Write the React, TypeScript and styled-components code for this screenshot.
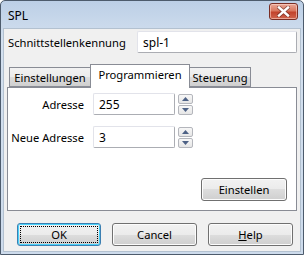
import React from 'react'
import styled, { createGlobalStyle } from 'styled-components'

const GlobalStyle = createGlobalStyle`
  html, body {
    margin: 0;
    padding: 0;
    background: #ffffff;
  }
  body {
    font-family: "Noto Sans", "Open Sans", sans-serif;
    font-size: 11.2px;
    color: #000000;
  }
`

const Window = styled.div`
  width: 304px;
  height: 255px;
  box-sizing: border-box;
  border: 1px solid #4d5b6c;
  border-radius: 5px 5px 0 0;
  background: linear-gradient(#bccfe6, #d3e0ef 40px, #cddbec);
  display: flex;
  flex-direction: column;
  overflow: hidden;
`

const TitleBar = styled.div`
  height: 27px;
  display: flex;
  align-items: flex-start;
  justify-content: space-between;
  padding: 0 5px 0 7px;
`

const Title = styled.div`
  font-size: 12px;
  line-height: 14px;
  margin-top: 8px;
`

const CloseButton = styled.div`
  width: 29px;
  height: 17px;
  margin-top: 2px;
  box-sizing: border-box;
  border: 1px solid #7a2e24;
  border-radius: 3px;
  background: linear-gradient(#e9a899, #d9785f 45%, #c2432c 55%, #d0654d);
  box-shadow: inset 0 0 0 1px rgba(255, 220, 210, 0.55);
  display: flex;
  align-items: center;
  justify-content: center;
`

const Client = styled.div`
  flex: 1;
  margin: 0 2px 2px 2px;
  background: #f0f0f0;
  border: 1px solid #b3c1d0;
  padding: 2px 3px 0 3px;
  display: flex;
  flex-direction: column;
`

const IdRow = styled.div`
  display: flex;
  align-items: center;
  justify-content: space-between;
  height: 22px;
  padding-left: 1px;
`

const TextBox = styled.div<{ $w: number }>`
  width: ${({ $w }) => $w}px;
  height: 22px;
  box-sizing: border-box;
  border: 1px solid #abadb3;
  border-top-color: #e2e3ea;
  border-left-color: #e2e3ea;
  border-radius: 2px;
  background: #ffffff;
  padding: 0 5px;
  display: flex;
  align-items: center;
  font-size: 12px;
`

const TabStrip = styled.div`
  display: flex;
  align-items: flex-end;
  margin-top: 11px;
  padding-left: 2px;
  height: 23px;
  position: relative;
  z-index: 1;
`

const Tab = styled.div<{ $w: number; $active?: boolean }>`
  width: ${({ $w }) => $w}px;
  height: ${({ $active }) => ($active ? 24 : 20)}px;
  box-sizing: border-box;
  border: 1px solid #898c95;
  border-bottom: ${({ $active }) => ($active ? 'none' : '1px solid #898c95')};
  margin-right: -1px;
  margin-bottom: ${({ $active }) => ($active ? -1 : 0)}px;
  background: ${({ $active }) =>
    $active ? '#ffffff' : 'linear-gradient(#f2f2f2, #ebebeb 50%, #dddddd 50%, #cfcfcf)'};
  display: flex;
  align-items: ${({ $active }) => ($active ? 'flex-start' : 'center')};
  padding-top: ${({ $active }) => ($active ? 2 : 0)}px;
  justify-content: center;
`

const Panel = styled.div`
  height: 124px;
  box-sizing: border-box;
  border: 1px solid #898c95;
  background: #ffffff;
  padding: 5px 9px 9px 3px;
  display: flex;
  flex-direction: column;
  gap: 11px;
`

const FieldRow = styled.div`
  display: flex;
  align-items: center;
`

const FieldLabel = styled.div`
  width: 73px;
  margin-right: 9px;
  text-align: right;
  white-space: nowrap;
`

const Spinner = styled.div`
  display: flex;
  flex-direction: column;
  gap: 1px;
  margin-left: 3px;
`

const SpinButton = styled.div`
  width: 15px;
  height: 10px;
  box-sizing: border-box;
  border: 1px solid #b4b6bc;
  border-radius: 2px;
  background: linear-gradient(#f7f7f7, #e6e6e6);
  display: flex;
  align-items: center;
  justify-content: center;
`

const PushButton = styled.div<{ $w: number; $default?: boolean }>`
  width: ${({ $w }) => $w}px;
  height: 23px;
  box-sizing: border-box;
  border: 1px solid ${({ $default }) => ($default ? '#3c7fb1' : '#707070')};
  border-radius: 3px;
  background: linear-gradient(#f2f2f2, #ebebeb 50%, #dddddd 50%, #cfcfcf);
  box-shadow: inset 0 0 0 1px ${({ $default }) => ($default ? '#48d2fb' : '#fcfcfc')};
  display: flex;
  align-items: center;
  justify-content: center;
  position: relative;
`

const FocusRect = styled.div`
  position: absolute;
  inset: 2px;
  border: 1px dotted #000000;
`

const PanelFooter = styled.div`
  margin-top: auto;
  display: flex;
  justify-content: flex-end;
`

const ButtonRow = styled.div`
  display: flex;
  gap: 11px;
  margin-top: 12px;
  padding-left: 10px;
`

const Mnemonic = styled.span`
  text-decoration: underline;
`

const Arrow = ({ up }: { up?: boolean }) => (
  <svg width="7" height="4" viewBox="0 0 7 4">
    <path d={up ? 'M3.5 0 L7 4 L0 4 Z' : 'M0 0 L7 0 L3.5 4 Z'} fill="#4d6185" />
  </svg>
)

const CloseGlyph = () => (
  <svg width="13" height="11" viewBox="0 0 13 11">
    <path
      d="M2 1.5 L11 9.5 M11 1.5 L2 9.5"
      stroke="#5a2a24"
      strokeWidth="4"
      strokeLinecap="square"
      opacity="0.6"
    />
    <path d="M2 1.5 L11 9.5 M11 1.5 L2 9.5" stroke="#ffffff" strokeWidth="2.4" strokeLinecap="square" />
  </svg>
)

const NumberField = ({ label, value }: { label: string; value: string }) => (
  <FieldRow>
    <FieldLabel>{label}</FieldLabel>
    <TextBox $w={82}>{value}</TextBox>
    <Spinner>
      <SpinButton>
        <Arrow up />
      </SpinButton>
      <SpinButton>
        <Arrow />
      </SpinButton>
    </Spinner>
  </FieldRow>
)

const App = () => (
  <>
    <GlobalStyle />
    <Window>
      <TitleBar>
        <Title>SPL</Title>
        <CloseButton>
          <CloseGlyph />
        </CloseButton>
      </TitleBar>
      <Client>
        <IdRow>
          <span>Schnittstellenkennung</span>
          <TextBox $w={160}>spl-1</TextBox>
        </IdRow>
        <TabStrip>
          <Tab $w={82}>Einstellungen</Tab>
          <Tab $w={100} $active>
            Programmieren
          </Tab>
          <Tab $w={62}>Steuerung</Tab>
        </TabStrip>
        <Panel>
          <NumberField label="Adresse" value="255" />
          <NumberField label="Neue Adresse" value="3" />
          <PanelFooter>
            <PushButton $w={86}>Einstellen</PushButton>
          </PanelFooter>
        </Panel>
        <ButtonRow>
          <PushButton $w={84} $default>
            <FocusRect />
            OK
          </PushButton>
          <PushButton $w={85}>Cancel</PushButton>
          <PushButton $w={85}>
            <span>
              <Mnemonic>H</Mnemonic>elp
            </span>
          </PushButton>
        </ButtonRow>
      </Client>
    </Window>
  </>
)

export default App
